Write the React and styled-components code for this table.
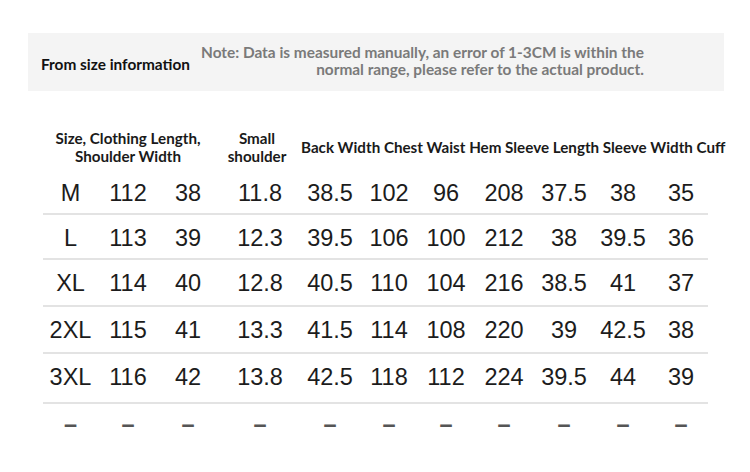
import React from "react";
import styled, { createGlobalStyle } from "styled-components";

const GlobalStyle = createGlobalStyle`
  html, body {
    margin: 0;
    padding: 0;
    background: #ffffff;
  }
  body {
    width: 750px;
    height: 472px;
    overflow: hidden;
  }
`;

const Page = styled.div`
  width: 750px;
  height: 472px;
  box-sizing: border-box;
  padding: 33px 26px 0 28px;
  font-family: "Lato", "Noto Sans", sans-serif;
`;

const Banner = styled.div`
  display: flex;
  align-items: center;
  height: 58px;
  background: #f4f4f4;
  padding-left: 13px;
`;

const BannerTitle = styled.div`
  font-size: 15.4px;
  font-weight: 700;
  color: #111111;
  padding-top: 4px;
`;

const BannerNote = styled.div`
  margin-left: 11px;
  font-size: 15.4px;
  font-weight: 700;
  line-height: 17px;
  color: #7a7a7a;
  text-align: right;
  margin-top: -2px;
  white-space: nowrap;
`;

const Table = styled.div`
  width: 665px;
  margin: 33px 0 0 15px;
`;

const HeaderRow = styled.div`
  display: flex;
  align-items: center;
  height: 46px;
  font-size: 15.2px;
  font-weight: 700;
  line-height: 18px;
  color: #1a1a1a;
  white-space: nowrap;
`;

const HeaderCell = styled.div`
  flex: 0 0 ${(p) => p.$width}px;
  text-align: center;
`;

const HeaderLabels = styled.div`
  flex: 0 0 auto;
`;

const Row = styled.div`
  display: grid;
  grid-template-columns: 55px 60px 60px 84px 56px 62px 52px 64px 56px 62px 54px;
  align-items: start;
  height: ${(p) => p.$height}px;
  box-sizing: border-box;
  border-bottom: ${(p) => (p.$last ? "none" : "2px solid #e3e3e3")};
`;

const Cell = styled.div`
  padding-top: ${(p) => (p.$muted ? 6 : 9)}px;
  line-height: 28px;
  text-align: center;
  font-family: "Liberation Sans", Arial, sans-serif;
  font-size: 23.5px;
  font-weight: ${(p) => (p.$muted ? 700 : 400)};
  color: ${(p) => (p.$muted ? "#555555" : "#1c1c1c")};
`;

const rows = [
  ["M", "112", "38", "11.8", "38.5", "102", "96", "208", "37.5", "38", "35"],
  ["L", "113", "39", "12.3", "39.5", "106", "100", "212", "38", "39.5", "36"],
  ["XL", "114", "40", "12.8", "40.5", "110", "104", "216", "38.5", "41", "37"],
  ["2XL", "115", "41", "13.3", "41.5", "114", "108", "220", "39", "42.5", "38"],
  ["3XL", "116", "42", "13.8", "42.5", "118", "112", "224", "39.5", "44", "39"],
];

const heights = [45, 45, 47, 47, 50];

export default function App() {
  return (
    <>
      <GlobalStyle />
      <Page>
        <Banner>
          <BannerTitle>From size information</BannerTitle>
          <BannerNote>
            Note: Data is measured manually, an error of 1-3CM is within the
            <br />
            normal range, please refer to the actual product.
          </BannerNote>
        </Banner>

        <Table>
          <HeaderRow>
            <HeaderCell $width={170}>
              Size, Clothing Length,
              <br />
              Shoulder Width
            </HeaderCell>
            <HeaderCell $width={88}>
              Small
              <br />
              shoulder
            </HeaderCell>
            <HeaderLabels>
              Back Width Chest Waist Hem Sleeve Length Sleeve Width Cuff
            </HeaderLabels>
          </HeaderRow>

          {rows.map((row, i) => (
            <Row key={row[0]} $height={heights[i]}>
              {row.map((value, j) => (
                <Cell key={j}>{value}</Cell>
              ))}
            </Row>
          ))}

          <Row $height={42} $last>
            {rows[0].map((_, j) => (
              <Cell key={j} $muted>
                –
              </Cell>
            ))}
          </Row>
        </Table>
      </Page>
    </>
  );
}
